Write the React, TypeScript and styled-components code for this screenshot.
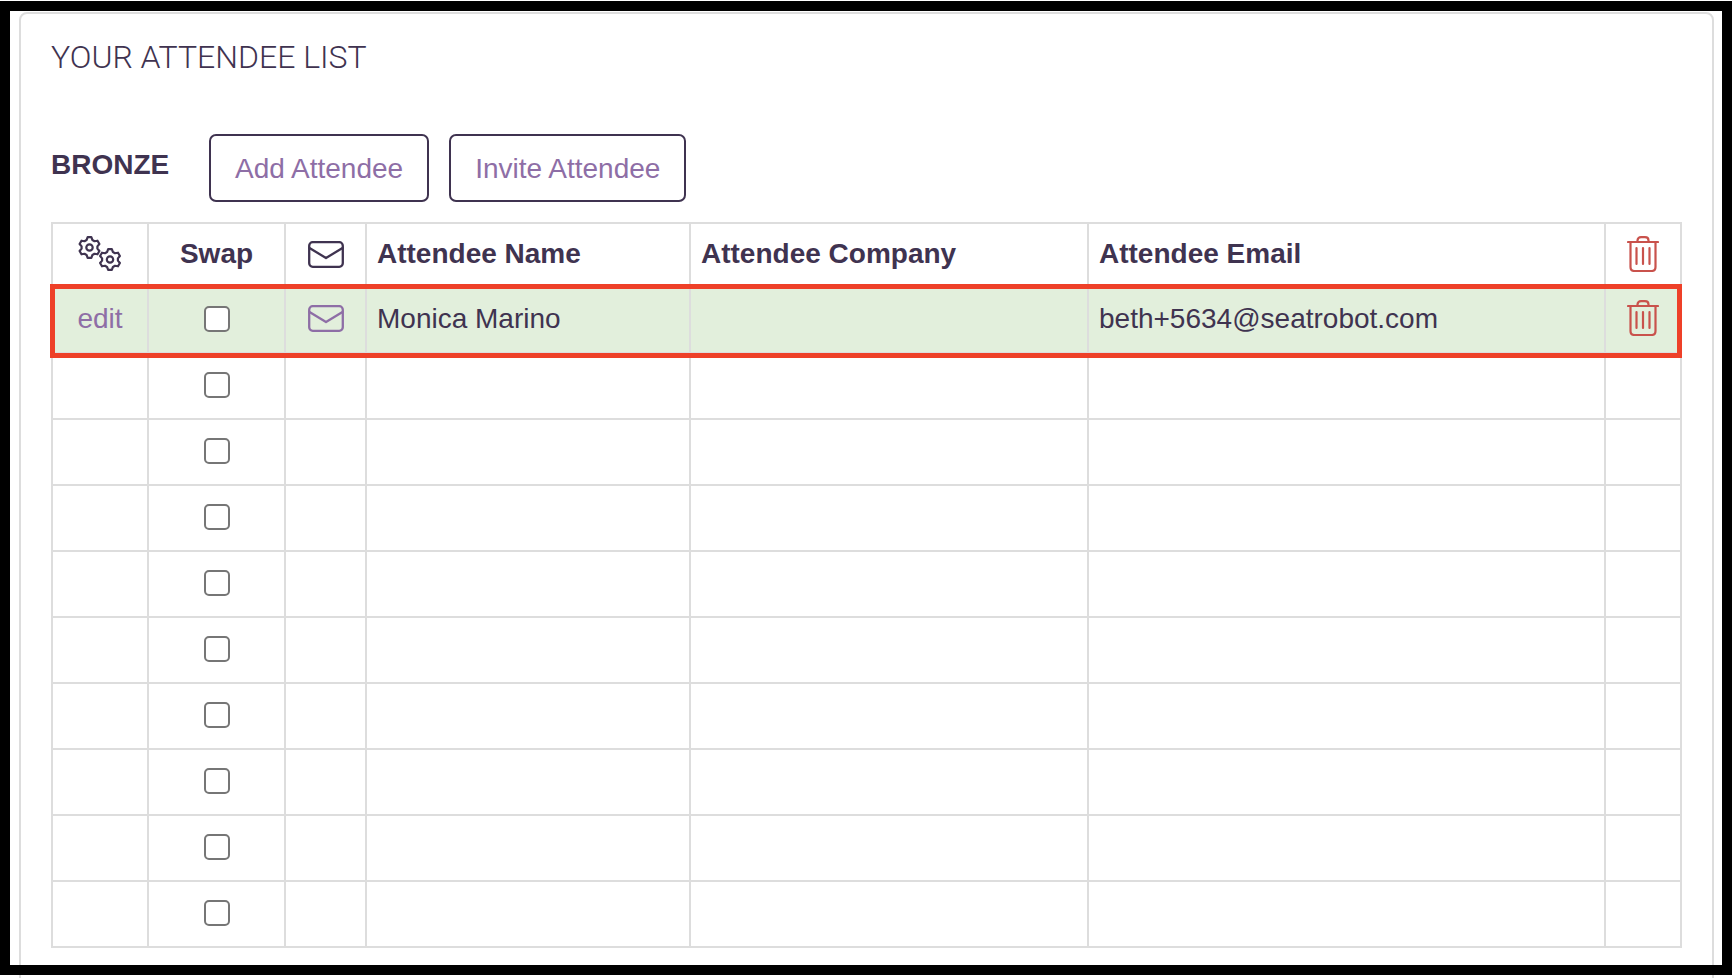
import React from 'react';
import { createGlobalStyle, styled } from 'styled-components';

const INK = '#3f3350';
const PURPLE = '#8e6ea6';
const TRASH = '#c9524c';
const LINE = '#dddddd';

const GlobalStyle = createGlobalStyle`
  html, body {
    margin: 0;
    padding: 0;
    background: #fff;
  }
  body {
    font-family: "Liberation Sans", Arial, sans-serif;
    color: ${INK};
  }
`;

// six toothed gear, outline computed around a centre point
const gearPath = (cx: number, cy: number, outer: number, inner: number) => {
  const pts: string[] = [];
  for (let i = 0; i < 6; i++) {
    const a = (Math.PI / 3) * i - Math.PI / 2;
    const step = Math.PI / 3;
    const at = (r: number, t: number) =>
      `${(cx + r * Math.cos(t)).toFixed(2)} ${(cy + r * Math.sin(t)).toFixed(2)}`;
    pts.push(at(outer, a - step * 0.17), at(outer, a + step * 0.17), at(inner, a + step * 0.36), at(inner, a + step * 0.64));
  }
  return `M${pts.join('L')}Z`;
};

const GearsIcon = () => (
  <svg width="44" height="36" viewBox="0 0 44 36" fill="none" stroke={INK} strokeWidth="2.2" strokeLinejoin="round">
    <path d={gearPath(11.5, 11.5, 10.5, 8)} />
    <circle cx="11.5" cy="11.5" r="3.2" />
    <path d={gearPath(32, 23.5, 10.5, 8)} />
    <circle cx="32" cy="23.5" r="3.2" />
  </svg>
);

const MailIcon = ({ color }: { color: string }) => (
  <svg width="36" height="27" viewBox="0 0 36 27" fill="none" stroke={color} strokeWidth="2.3" strokeLinecap="round" strokeLinejoin="round">
    <rect x="1.2" y="1.2" width="33.6" height="24.6" rx="3.5" />
    <path d="M1.5 7 L18 17 L34.5 7" />
  </svg>
);

const TrashIcon = () => (
  <svg width="32" height="36" viewBox="0 0 32 36" fill="none" stroke={TRASH} strokeWidth="2.2" strokeLinecap="round" strokeLinejoin="round">
    <path d="M1 6 H31" />
    <path d="M10.5 6 V4.5 C10.5 2.5 12 1.2 14 1.2 H18 C20 1.2 21.5 2.5 21.5 4.5 V6" />
    <path d="M3.5 6 V31 C3.5 33.5 5 35 7.5 35 H24.5 C27 35 28.5 33.5 28.5 31 V6" />
    <path d="M9.5 12 V28 M16 12 V28 M22.5 12 V28" />
  </svg>
);

const Page = styled.div`
  position: relative;
  width: 1734px;
  height: 978px;
  overflow: hidden;
  padding: 12px 20px 0 19px;
  box-sizing: border-box;
`;

const ScreenshotFrame = styled.div`
  position: absolute;
  top: 1px;
  left: 0;
  width: 1732px;
  height: 974px;
  box-sizing: border-box;
  border: 10px solid #000;
  pointer-events: none;
`;

const Panel = styled.section`
  border: 2px solid ${LINE};
  border-radius: 8px;
  height: 1000px;
  box-sizing: border-box;
  padding: 25px 30px 0 30px;
`;

const Title = styled.h2`
  margin: 0;
  font-family: Roboto, sans-serif;
  font-weight: 300;
  font-size: 32px;
  line-height: 36px;
  color: ${INK};
`;

const Toolbar = styled.div`
  display: flex;
  align-items: center;
  gap: 20px;
  margin-top: 59px;
`;

const TierLabel = styled.strong`
  font-size: 28px;
  font-weight: 700;
  width: 138px;
  margin-top: -6px;
`;

const ActionButton = styled.button`
  height: 68px;
  padding: 2px 24px 0;
  box-sizing: border-box;
  background: #fff;
  border: 2px solid ${INK};
  border-radius: 7px;
  color: ${PURPLE};
  font-family: "Liberation Sans", Arial, sans-serif;
  font-size: 28px;
`;

const TableWrap = styled.div`
  position: relative;
  margin-top: 20px;
`;

// red annotation drawn over the first attendee row
const RowMarker = styled.div`
  position: absolute;
  top: 62px;
  left: -1px;
  width: 1632px;
  height: 74px;
  box-sizing: border-box;
  border: 5px solid #ee4028;
  pointer-events: none;
`;

const AttendeeTable = styled.table`
  width: 1631px;
  table-layout: fixed;
  border-collapse: collapse;
  border: 2px solid ${LINE};
`;

const Col = styled.col<{ $width: number }>`
  width: ${(p) => p.$width}px;
`;

const HeadCell = styled.th<{ $align?: string }>`
  height: 64px;
  padding: 0 10px 2px;
  box-sizing: border-box;
  border: 2px solid ${LINE};
  font-size: 28px;
  font-weight: 700;
  text-align: ${(p) => p.$align || 'left'};
`;

const Row = styled.tr<{ $highlight?: boolean }>`
  background: ${(p) => (p.$highlight ? '#e2efdc' : 'transparent')};
`;

const IconSlot = styled.span`
  display: flex;
  justify-content: center;
  align-items: center;
`;

const Cell = styled.td<{ $align?: string }>`
  height: 66px;
  box-sizing: border-box;
  padding: 0 10px 2px;
  border: 2px solid ${LINE};
  font-size: 28px;
  text-align: ${(p) => p.$align || 'left'};

  ${IconSlot} {
    margin-top: -2px;
  }
`;

const EditLink = styled.a`
  color: ${PURPLE};
  text-decoration: none;
`;

const SwapBox = styled.input`
  appearance: none;
  display: block;
  width: 26px;
  height: 26px;
  margin: 0 auto;
  box-sizing: border-box;
  background: #fff;
  border: 2px solid #767676;
  border-radius: 5px;
`;

const columns = [96, 137, 81, 324, 398, 517, 76];
const emptyRows = Array.from({ length: 9 }, (_, i) => i);

export default function App() {
  return (
    <Page>
      <GlobalStyle />
      <Panel>
        <Title>YOUR ATTENDEE LIST</Title>
        <Toolbar>
          <TierLabel>BRONZE</TierLabel>
          <ActionButton>Add Attendee</ActionButton>
          <ActionButton>Invite Attendee</ActionButton>
        </Toolbar>
        <TableWrap>
          <AttendeeTable>
            <colgroup>
              {columns.map((w, i) => (
                <Col key={i} $width={w} />
              ))}
            </colgroup>
            <thead>
              <tr>
                <HeadCell $align="center">
                  <IconSlot>
                    <GearsIcon />
                  </IconSlot>
                </HeadCell>
                <HeadCell $align="center">Swap</HeadCell>
                <HeadCell $align="center">
                  <IconSlot>
                    <MailIcon color={INK} />
                  </IconSlot>
                </HeadCell>
                <HeadCell>Attendee Name</HeadCell>
                <HeadCell>Attendee Company</HeadCell>
                <HeadCell>Attendee Email</HeadCell>
                <HeadCell $align="center">
                  <IconSlot>
                    <TrashIcon />
                  </IconSlot>
                </HeadCell>
              </tr>
            </thead>
            <tbody>
              <Row $highlight>
                <Cell $align="center">
                  <EditLink>edit</EditLink>
                </Cell>
                <Cell>
                  <SwapBox type="checkbox" />
                </Cell>
                <Cell $align="center">
                  <IconSlot>
                    <MailIcon color={PURPLE} />
                  </IconSlot>
                </Cell>
                <Cell>Monica Marino</Cell>
                <Cell />
                <Cell>beth+5634@seatrobot.com</Cell>
                <Cell $align="center">
                  <IconSlot>
                    <TrashIcon />
                  </IconSlot>
                </Cell>
              </Row>
              {emptyRows.map((i) => (
                <Row key={i}>
                  <Cell />
                  <Cell>
                    <SwapBox type="checkbox" />
                  </Cell>
                  <Cell />
                  <Cell />
                  <Cell />
                  <Cell />
                  <Cell />
                </Row>
              ))}
            </tbody>
          </AttendeeTable>
          <RowMarker />
        </TableWrap>
      </Panel>
      <ScreenshotFrame />
    </Page>
  );
}
